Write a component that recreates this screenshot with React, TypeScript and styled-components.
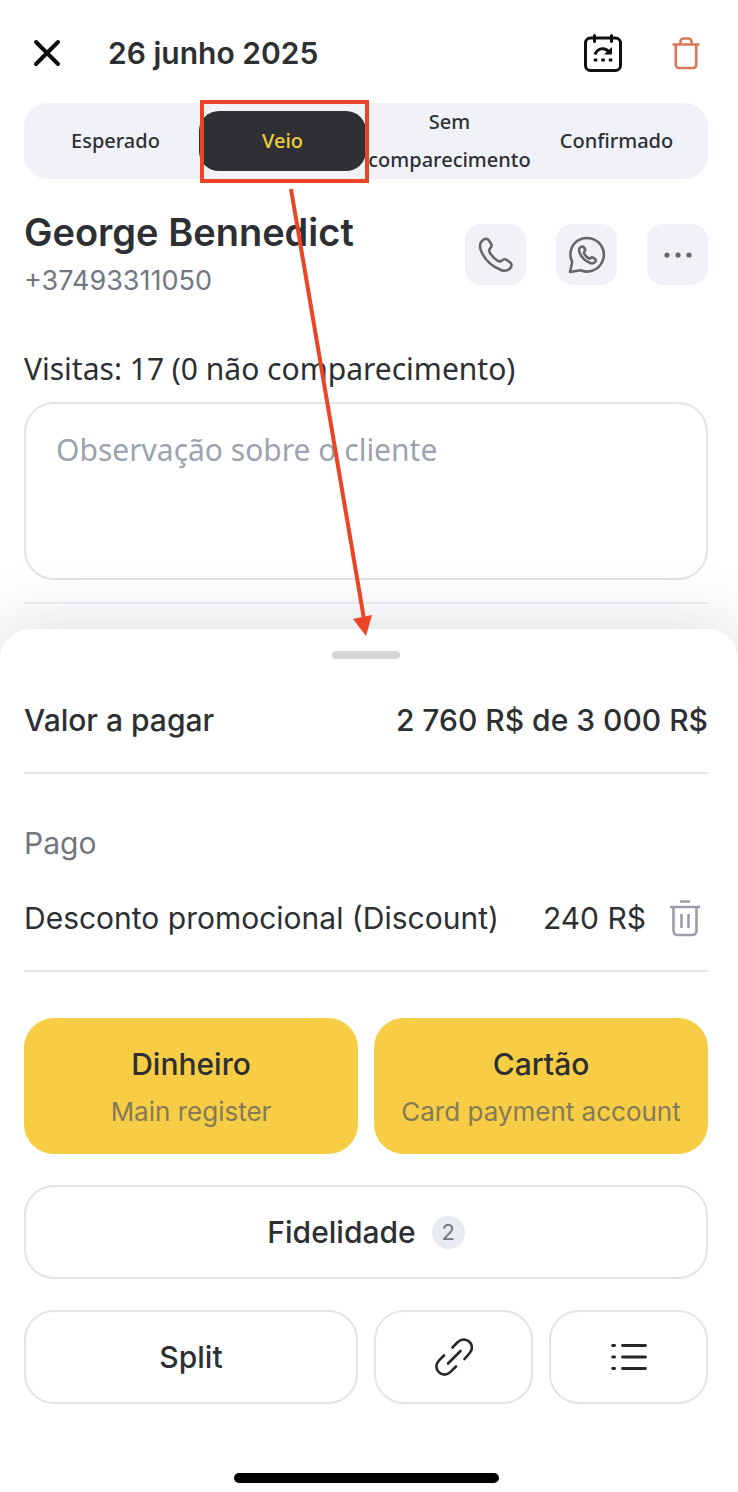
import React from "react";
import styled, { createGlobalStyle, css } from "styled-components";

const ink = "#2d2f33";
const muted = "#74767e";
const line = "#e4e4e7";
const tint = "#f0f2f8";
const red = "#eb4426";
const plain = `"Noto Sans", "Open Sans", sans-serif`;

const GlobalStyle = createGlobalStyle`
  *, *::before, *::after { box-sizing: border-box; }
  body { margin: 0; background: #fff; color: ${ink}; font-family: Inter, "Liberation Sans", sans-serif; }
  button, textarea { font: inherit; color: inherit; margin: 0; }
  h1, h2, h3, p { margin: 0; }
  svg { display: block; flex: none; }
`;

const Page = styled.div`
  display: flex;
  flex-direction: column;
  min-height: 100vh;
  overflow-x: hidden;
`;

const Visit = styled.main`
  display: flex;
  flex-direction: column;
  padding: 0 30px 25px 24px;
`;

const Header = styled.header`
  display: flex;
  align-items: center;
  height: 103px;
  padding: 2px 8px 0;
`;

const BareButton = styled.button`
  display: flex;
  padding: 0;
  border: 0;
  background: none;
  cursor: pointer;
`;

const HeaderTitle = styled.h1`
  flex: 1;
  padding-left: 46px;
  font-size: 30px;
  line-height: 36px;
  font-weight: 600;
`;

const HeaderActions = styled.div`
  display: flex;
  align-items: center;
  gap: 50px;
`;

const Tabs = styled.div`
  display: grid;
  grid-template-columns: repeat(4, minmax(0, 1fr));
  align-items: center;
  height: 76px;
  padding: 8px;
  border-radius: 24px;
  background: ${tint};
`;

const TabCell = styled.div`
  position: relative;
  display: flex;
`;

const Tab = styled.button<{ $active?: boolean }>`
  display: flex;
  flex: 1;
  align-items: center;
  justify-content: center;
  min-width: 0;
  height: 60px;
  padding: 0;
  border: 0;
  border-radius: 20px;
  background: none;
  font-family: ${plain};
  font-size: 20px;
  line-height: 38px;
  font-weight: 500;
  cursor: pointer;
  ${(p) => p.$active && css`background: #2e3035; color: #f0d03c;`}
`;

const Highlight = styled.span`
  position: absolute;
  inset: -11px -3px -12px 1px;
  border: 4px solid ${red};
  pointer-events: none;
  z-index: 3;
`;

const Arrow = styled.svg`
  position: absolute;
  left: 87px;
  top: 76px;
  pointer-events: none;
  z-index: 3;
`;

const Client = styled.section`
  display: flex;
  align-items: center;
  justify-content: space-between;
  padding-top: 27px;
`;

const ClientName = styled.h2`
  font-size: 38px;
  line-height: 52px;
  font-weight: 600;
`;

const ClientPhone = styled.p`
  color: ${muted};
  font-size: 27px;
  line-height: 45px;
`;

const ClientActions = styled.div`
  display: flex;
  gap: 30px;
`;

const IconButton = styled.button`
  display: flex;
  align-items: center;
  justify-content: center;
  width: 61px;
  height: 61px;
  padding: 0;
  border: 0;
  border-radius: 16px;
  background: ${tint};
  color: #66676c;
  cursor: pointer;
`;

const Visits = styled.p`
  padding: 46px 0 13px;
  font-family: ${plain};
  font-size: 30px;
  line-height: 40px;
`;

const Note = styled.textarea`
  display: block;
  width: 100%;
  height: 178px;
  padding: 26px 30px;
  border: 2px solid ${line};
  border-radius: 30px;
  background: #fff;
  font-family: ${plain};
  font-size: 30px;
  line-height: 40px;
  resize: none;
  &::placeholder { color: #9ba3af; opacity: 1; }
`;

const Rule = styled.hr`
  width: 100%;
  height: 2px;
  margin: 0;
  border: 0;
  background: ${line};
`;

const VisitRule = styled(Rule)`
  margin-top: 22px;
  background: #f0f0f3;
`;

const Sheet = styled.section`
  position: relative;
  display: flex;
  flex: 1;
  flex-direction: column;
  padding: 22px 30px 9px 24px;
  border-radius: 30px 30px 0 0;
  background: #fff;
  box-shadow: 0 0 72px rgba(40, 50, 70, 0.18);
`;

const Handle = styled.span`
  align-self: center;
  width: 68px;
  height: 8px;
  border-radius: 4px;
  background: #d6d6d6;
`;

const Total = styled.div`
  display: flex;
  align-items: center;
  justify-content: space-between;
  height: 113px;
  padding-top: 8px;
  font-size: 30px;
  line-height: 40px;
  font-weight: 500;
`;

const PaidTitle = styled.h3`
  padding-top: 49px;
  color: ${muted};
  font-size: 30px;
  line-height: 40px;
  font-weight: 400;
`;

const PaidRow = styled.div`
  display: flex;
  align-items: center;
  justify-content: space-between;
  height: 107px;
  padding-top: 3px;
  font-size: 30px;
  line-height: 40px;
`;

const PaidAmount = styled.div`
  display: flex;
  align-items: center;
  gap: 24px;
  padding-right: 8px;
`;

const Actions = styled.div`
  display: grid;
  grid-template-columns: repeat(4, minmax(0, 1fr));
  gap: 31px 16px;
  padding-top: 46px;
`;

const ActionButton = styled.button<{ $span?: number }>`
  grid-column: span ${(p) => p.$span ?? 1};
  display: flex;
  align-items: center;
  justify-content: center;
  gap: 16px;
  height: 94px;
  padding: 0;
  border: 2px solid ${line};
  border-radius: 30px;
  background: #fff;
  font-size: 30px;
  line-height: 40px;
  font-weight: 500;
  cursor: pointer;
`;

const PayButton = styled(ActionButton)`
  flex-direction: column;
  gap: 8px;
  height: 136px;
  padding-top: 4px;
  border: 0;
  background: #f6cd45;
`;

const PayAccount = styled.span`
  color: #857a58;
  font-size: 26px;
  font-weight: 400;
`;

const Count = styled.span`
  display: flex;
  align-items: center;
  justify-content: center;
  width: 33px;
  height: 33px;
  border-radius: 50%;
  background: #e9ebf3;
  color: ${muted};
  font-size: 22px;
  font-weight: 400;
`;

const HomeBar = styled.div`
  align-self: center;
  width: 265px;
  height: 10px;
  margin-top: auto;
  border-radius: 5px;
  background: #000;
`;

const CloseIcon = () => (
  <svg width="30" height="30" viewBox="0 0 30 30" fill="none" stroke="#0c0c0d" strokeWidth="4" strokeLinecap="round">
    <path d="M4 4l22 22M26 4L4 26" />
  </svg>
);

const RescheduleIcon = () => (
  <svg width="38" height="38" viewBox="0 0 38 38" fill="none" stroke="#101012" strokeWidth="3">
    <rect x="1.5" y="4" width="35" height="32.5" rx="5" />
    <path d="M10.500 1.500v6M27.500 1.500v6" strokeLinecap="round" />
    <path d="M11 20.500c2.500-6.500 9.500-7.500 13.500-3" />
    <path d="M28 13v7.500h-8z" fill="#101012" stroke="none" />
    <path d="M9.800 26h3.500M17.300 26h3.500M24.800 26h3.500" strokeWidth="2.800" />
  </svg>
);

const DeleteIcon = () => (
  <svg width="28" height="34" viewBox="0 0 28 34" fill="none" stroke="#d9775a" strokeWidth="2.600">
    <path d="M0.500 8.500h27M8.500 8V5.500a3 3 0 0 1 3-3h5a3 3 0 0 1 3 3V8" />
    <path d="M3.800 8.500v20.500a3 3 0 0 0 3 3h14.400a3 3 0 0 0 3-3V8.500" />
  </svg>
);

const handset =
  "M4.200 3.700C6.200 1.500 9 1 10.800 3.400l2 2.800c1.300 2 .8 3.700-.7 5.200-1.500 1.600-1.300 2.800.2 5 1.700 2.500 4 5 6.600 6.900 2 1.500 3.400 1.600 5 .2 1.700-1.500 3.500-1.600 5.300-.3l2.700 2c2.400 1.900 2 4.500-.2 6.600-2.200 2-5.200 2.500-8.700 1.200C12.500 28.800 5.500 21 2.600 12.300 1.500 8.800 2.200 5.800 4.200 3.700z";

const PhoneIcon = () => (
  <svg width="36" height="36" viewBox="0 0 36 36" fill="none" stroke="currentColor" strokeWidth="2.600" strokeLinejoin="round">
    <path d={handset} />
  </svg>
);

const WhatsAppIcon = () => (
  <svg width="38" height="38" viewBox="0 0 38 38" fill="none" stroke="currentColor" strokeWidth="2.600" strokeLinejoin="round">
    <path d="M2 36l2.200-10C.300 18 3 8.500 10.500 4.200 18.500-.3 28.600 2.300 33.500 10c4.700 7.700 2.200 18-5.500 23-4.800 3-10.500 3.300-15.300 1.200z" />
    <path d={handset} transform="translate(10 9.500) scale(0.530)" strokeWidth="4.900" />
  </svg>
);

const MoreIcon = () => (
  <svg width="30" height="8" viewBox="0 0 30 8" fill="currentColor">
    <circle cx="4" cy="4" r="2.600" />
    <circle cx="15" cy="4" r="2.600" />
    <circle cx="26" cy="4" r="2.600" />
  </svg>
);

const BinIcon = () => (
  <svg width="30" height="38" viewBox="0 0 30 38" fill="none" stroke="#9b9eaa" strokeWidth="2.600">
    <path d="M10 2.500h10M0 8h30M3.500 8v24a4 4 0 0 0 4 4h15a4 4 0 0 0 4-4V8M11.500 15v14M18.500 15v14" />
  </svg>
);

const LinkIcon = () => (
  <svg width="38" height="38" viewBox="0 0 38 38" fill="none" stroke="#25272a" strokeWidth="2.600" strokeLinecap="round">
    <path d="M17.500 9.500l4.800-5C26 .7 31 .6 34.400 3.800s3.300 8.200-.2 11.800L29.500 21" />
    <path d="M9 17.500l-4.900 4.800c-3.600 3.700-3.500 8.700-.3 11.900s8.100 3.300 11.700-.3l5.500-5.400" />
    <path d="M13 25.500L25.500 13" />
  </svg>
);

const ListIcon = () => (
  <svg width="36" height="28" viewBox="0 0 36 28" fill="none" stroke="#25272a" strokeWidth="2.800" strokeLinecap="round">
    <path d="M1.600 2.500h2M1.600 14h2M1.600 25.500h2M11.500 2.500h23M11.500 14h23M11.500 25.500h23" />
  </svg>
);

const statuses = ["Esperado", "Veio", "Sem comparecimento", "Confirmado"];

export default function App() {
  return (
    <>
      <GlobalStyle />
      <Page>
        <Visit>
          <Header>
            <BareButton aria-label="Fechar"><CloseIcon /></BareButton>
            <HeaderTitle>26 junho 2025</HeaderTitle>
            <HeaderActions>
              <BareButton aria-label="Reagendar"><RescheduleIcon /></BareButton>
              <BareButton aria-label="Excluir"><DeleteIcon /></BareButton>
            </HeaderActions>
          </Header>

          <Tabs>
            {statuses.map((status) => {
              const active = status === "Veio";
              return (
                <TabCell key={status}>
                  <Tab $active={active} aria-pressed={active}>{status}</Tab>
                  {active && (
                    <>
                      <Highlight />
                      <Arrow width="90" height="450" viewBox="0 0 90 450" aria-hidden="true">
                        <path d="M5 2L78 432" stroke={red} strokeWidth="4" />
                        <path d="M67 432l19-4-6 21z" fill={red} />
                      </Arrow>
                    </>
                  )}
                </TabCell>
              );
            })}
          </Tabs>

          <Client>
            <div>
              <ClientName>George Bennedict</ClientName>
              <ClientPhone>+37493311050</ClientPhone>
            </div>
            <ClientActions>
              <IconButton aria-label="Ligar"><PhoneIcon /></IconButton>
              <IconButton aria-label="WhatsApp"><WhatsAppIcon /></IconButton>
              <IconButton aria-label="Mais"><MoreIcon /></IconButton>
            </ClientActions>
          </Client>

          <Visits>Visitas: 17 (0 não comparecimento)</Visits>
          <Note aria-label="Observação sobre o cliente" placeholder="Observação sobre o cliente" />
          <VisitRule />
        </Visit>

        <Sheet>
          <Handle />
          <Total>
            <span>Valor a pagar</span>
            <span>2 760 R$ de 3 000 R$</span>
          </Total>
          <Rule />
          <PaidTitle>Pago</PaidTitle>
          <PaidRow>
            <span>Desconto promocional (Discount)</span>
            <PaidAmount>
              <span>240 R$</span>
              <BareButton aria-label="Remover desconto"><BinIcon /></BareButton>
            </PaidAmount>
          </PaidRow>
          <Rule />
          <Actions>
            <PayButton $span={2}>
              Dinheiro
              <PayAccount>Main register</PayAccount>
            </PayButton>
            <PayButton $span={2}>
              Cartão
              <PayAccount>Card payment account</PayAccount>
            </PayButton>
            <ActionButton $span={4}>
              Fidelidade
              <Count>2</Count>
            </ActionButton>
            <ActionButton $span={2}>Split</ActionButton>
            <ActionButton aria-label="Copiar link"><LinkIcon /></ActionButton>
            <ActionButton aria-label="Lista"><ListIcon /></ActionButton>
          </Actions>
          <HomeBar />
        </Sheet>
      </Page>
    </>
  );
}
